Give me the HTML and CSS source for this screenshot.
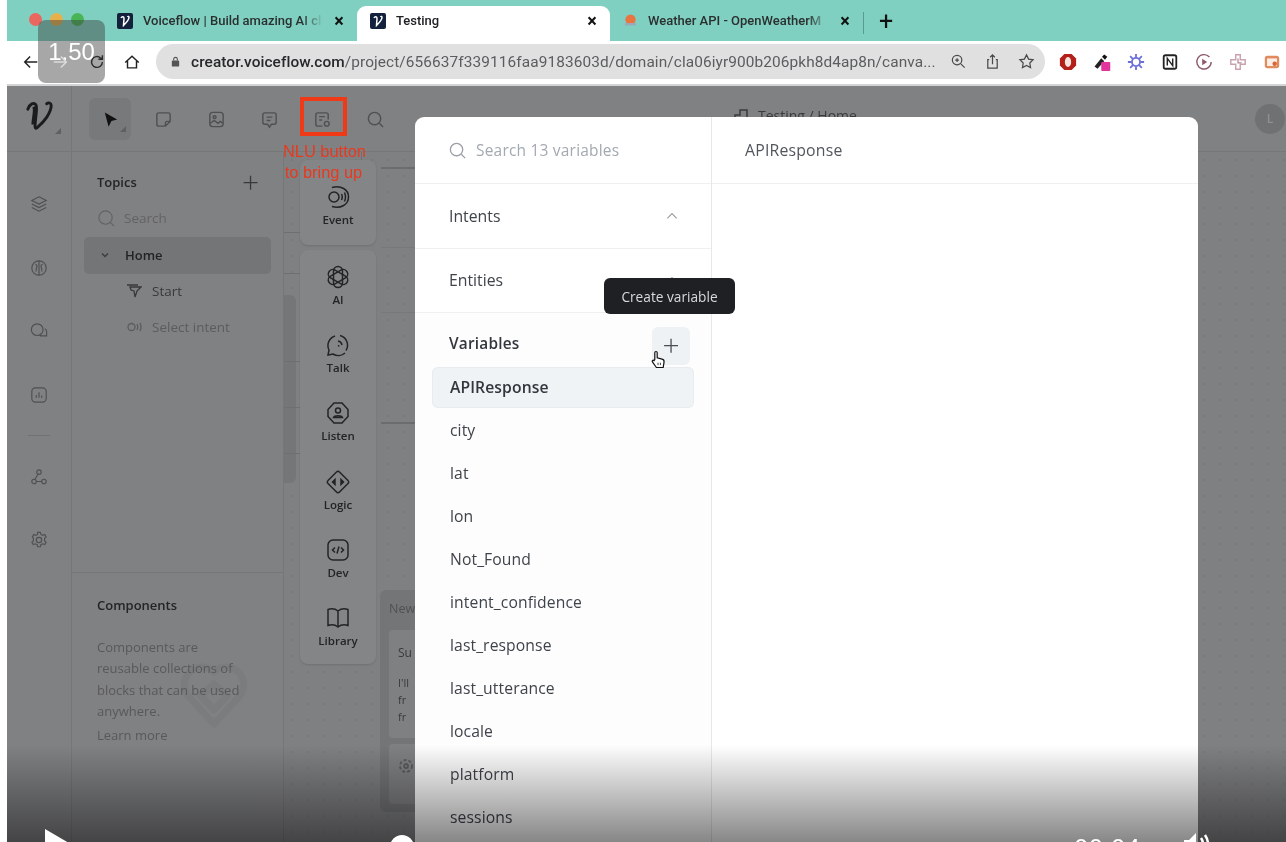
FILE: index.html
```html
<!DOCTYPE html>
<html lang="en">
<head>
<meta charset="utf-8">
<title>Testing</title>
<link rel="stylesheet" href="styles.css">
</head>
<body>
<div class="video">
  <div class="tabbar">
    <div class="lights"><i class="light red"></i><i class="light orange"></i><i class="light green"></i></div>
    <div class="tab tab-one">
      <svg class="fav" viewBox="0 0 16 16"><rect width="16" height="16" rx="2" fill="#14213d"/><path d="M4 5c1-2 3-1.500 3 .5 0 2-.5 5-.5 7C9 10 12 7 12 4.500c0-1.200-1-1.500-1.500-.5" fill="none" stroke="#fff" stroke-width="1.500"/></svg>
      <span class="tab-label fade">Voiceflow | Build amazing AI cl</span><span class="tab-x">×</span>
    </div>
    <div class="tab tab-two">
      <svg class="fav" viewBox="0 0 16 16"><rect width="16" height="16" rx="2" fill="#14213d"/><path d="M4 5c1-2 3-1.500 3 .5 0 2-.5 5-.5 7C9 10 12 7 12 4.500c0-1.200-1-1.500-1.500-.5" fill="none" stroke="#fff" stroke-width="1.500"/></svg>
      <span class="tab-label">Testing</span><span class="tab-x">×</span>
    </div>
    <div class="tab tab-three">
      <svg class="fav small" viewBox="0 0 16 16"><circle cx="8" cy="7" r="5.500" fill="#e8743f"/><path d="M2 12h12" stroke="#9ab" stroke-width="2.500"/></svg>
      <span class="tab-label fade">Weather API - OpenWeatherM</span><span class="tab-x">×</span>
    </div>
    <i class="tab-sep"></i>
    <span class="tab-plus">+</span>
  </div>

  <div class="browserbar">
    <svg class="nav-icon back" viewBox="0 0 20 20"><path d="M17 10H3M9 4l-6 6 6 6"/></svg>
    <svg class="nav-icon forward" viewBox="0 0 20 20"><path d="M3 10h14M11 4l6 6-6 6"/></svg>
    <svg class="nav-icon reload" viewBox="0 0 20 20"><path d="M16 10a6 6 0 1 1-2-4.500L16 7M16 2.500V7h-4.500"/></svg>
    <svg class="nav-icon home" viewBox="0 0 20 20"><path d="M2.500 10.500 10 3.500l7.500 7M5 9v7.500h10V9"/></svg>
    <div class="urlbar">
      <svg class="lock" viewBox="0 0 12 12"><rect x="2" y="5" width="8" height="6.500" rx="1"/><path d="M4 5V3.500a2 2 0 0 1 4 0V5" fill="none" stroke="#555" stroke-width="1.200"/></svg>
      <span class="url"><b>creator.voiceflow.com</b>/project/656637f339116faa9183603d/domain/cla06iyr900b206pkh8d4ap8n/canva...</span>
      <svg class="url-icon" viewBox="0 0 18 18"><circle cx="7.500" cy="7.500" r="5"/><path d="m11.500 11.500 4 4M5.500 7.500h4M7.500 5.500v4"/></svg>
      <svg class="url-icon" viewBox="0 0 18 18"><path d="M5.500 7H4v9h10V7h-1.500M9 12V2M6.500 4.500 9 2l2.500 2.500"/></svg>
      <svg class="url-icon" viewBox="0 0 18 18"><path d="m9 2 2.200 4.500 4.800.7-3.500 3.400.8 4.900L9 13.200l-4.300 2.300.8-4.900L2 7.200l4.800-.7z"/></svg>
    </div>
    <div class="extensions">
      <svg class="ext" viewBox="0 0 20 20"><path d="M6 1h8l5 5v8l-5 5H6l-5-5V6z" fill="#b3201a"/><ellipse cx="10" cy="10" rx="3.500" ry="5.500" fill="#f4e4dc"/></svg>
      <svg class="ext" viewBox="0 0 24 24"><path d="m2 18 9-11 4 4-9 10z" fill="#222"/><path d="m12 5 3-3 4 3-3 4z" fill="#111"/><rect x="11" y="12" width="12" height="12" rx="1" fill="#e0359a"/></svg>
      <svg class="ext" viewBox="0 0 20 20"><circle cx="10" cy="10" r="4.500" fill="none" stroke="#6a6fd8" stroke-width="2"/><path d="M10 1v4M10 15v4M1 10h4M15 10h4M3.500 3.500l3 3M13.500 13.500l3 3M16.500 3.500l-3 3M6.500 13.500l-3 3" stroke="#6a6fd8" stroke-width="2"/></svg>
      <svg class="ext" viewBox="0 0 20 20"><rect x="3" y="2.500" width="14" height="15" rx="2" fill="#fff" stroke="#222" stroke-width="2"/><path d="M7 14V6l6 8V6" fill="none" stroke="#222" stroke-width="1.600"/></svg>
      <svg class="ext" viewBox="0 0 20 20"><path d="M16 4.500A8 8 0 1 0 18 10" fill="none" stroke="#8d5a6e" stroke-width="1.600"/><path d="m8 6.500 5.500 3.500L8 13.500z" fill="#8d5a6e"/></svg>
      <svg class="ext" viewBox="0 0 20 20"><path d="M7.500 2h5v5.500H18v5h-5.500V18h-5v-5.500H2v-5h5.500z" fill="#fff" stroke="#c9a3ac" stroke-width="1.600"/><path d="M10 6v5h4" fill="none" stroke="#b48b95" stroke-width="1.400"/></svg>
      <svg class="ext" viewBox="0 0 20 20"><rect x="2" y="3" width="16" height="14" rx="3" fill="#e08a5e"/><rect x="4.500" y="6" width="11" height="8.500" fill="#fbeee6"/><circle cx="13" cy="12" r="2.500" fill="#d8643a"/></svg>
    </div>
  </div>

  <header class="apphead">
    <div class="logo-cell">
      <svg class="logo" viewBox="0 0 30 34"><path d="M2 10C4 4 9 2 11 5c2 3 0 8-1 24 0 2 1 3 3 1C20 24 28 14 28 6c0-3-3-4-5-2" fill="none" stroke="#1b1c1e" stroke-width="3.200" stroke-linecap="round"/><path d="M9 7c2 5-1 13-1 20" fill="none" stroke="#1b1c1e" stroke-width="4"/></svg>
      <i class="corner"></i>
    </div>
    <div class="tools">
      <div class="tool selected"><svg viewBox="0 0 20 20"><path d="M4 2.500 17 10l-6 1.500-3 6z" fill="#111"/></svg><i class="corner"></i></div>
      <div class="tool"><svg viewBox="0 0 20 20"><path d="M5 3h10a2 2 0 0 1 2 2v7l-5 5H5a2 2 0 0 1-2-2V5a2 2 0 0 1 2-2zM12 17v-3a2 2 0 0 1 2-2h3"/></svg></div>
      <div class="tool"><svg viewBox="0 0 20 20"><rect x="3" y="2.500" width="14" height="15" rx="3"/><circle cx="8" cy="7.500" r="1.500"/><path d="m3.500 14 4-3 4 3 2.500-2 2.500 2"/></svg></div>
      <div class="tool"><svg viewBox="0 0 20 20"><path d="M5 3h10a2 2 0 0 1 2 2v8a2 2 0 0 1-2 2h-3l-2 3-2-3H5a2 2 0 0 1-2-2V5a2 2 0 0 1 2-2zM7 7.500h6M7 11h4"/></svg></div>
      <div class="tool"><svg viewBox="0 0 20 20"><path d="M10 17H5a2 2 0 0 1-2-2V5a2 2 0 0 1 2-2h9a2 2 0 0 1 2 2v5M6.500 7h6M6.500 10.500h3"/><circle cx="14.500" cy="14.500" r="2.500"/></svg></div>
      <div class="tool"><svg viewBox="0 0 20 20"><circle cx="9" cy="9" r="6.500"/><path d="m14 14 4 4"/></svg></div>
    </div>
    <div class="doc-title"><svg viewBox="0 0 18 18"><path d="M3 8v7h12V3H8v5z"/></svg><span>Testing / Home</span></div>
    <div class="avatar">L</div>
  </header>

  <div class="appbody">
    <nav class="rail">
      <svg viewBox="0 0 20 20"><path d="m10 2 8 4-8 4-8-4zM2 10l8 4 8-4M2 14l8 4 8-4"/></svg>
      <svg viewBox="0 0 20 20"><circle cx="10" cy="10" r="8"/><path d="M10 2v16M6 6c2 0 2 2 1.500 3.500S6 13 7 14M14 6c-2 0-2 2-1.500 3.500S14 13 13 14"/></svg>
      <svg viewBox="0 0 20 20"><circle cx="8" cy="8.500" r="6.500"/><path d="M11 15.500h7.500V11a4 4 0 0 0-2-3.500M12.500 15.500 10.500 14"/></svg>
      <svg viewBox="0 0 20 20"><rect x="2" y="2" width="16" height="16" rx="4"/><path d="M7 10v3M10 7v6M13 10.500V13"/></svg>
      <i class="rail-sep"></i>
      <svg viewBox="0 0 20 20"><circle cx="10" cy="4.500" r="2.500"/><circle cx="4.500" cy="15" r="2.500"/><circle cx="15.500" cy="15" r="2.500"/><path d="M9 7 5.500 12.500M7 15h6"/></svg>
      <svg viewBox="0 0 20 20"><path d="M8.500 1.500h3l.6 2.300 2.100 1 2.200-.9 1.500 2.600-1.700 1.600v2.800l1.700 1.600-1.500 2.600-2.200-.9-2.100 1-.6 2.300h-3l-.6-2.300-2.100-1-2.200.9-1.500-2.600 1.700-1.600V8.100L2.600 6.500l1.500-2.600 2.200.9 2.100-1z"/><circle cx="10" cy="10" r="3"/></svg>
    </nav>

    <aside class="sidebar">
      <section class="topics">
        <div class="topics-head"><h3>Topics</h3><span class="plus">+</span></div>
        <div class="side-search">
          <svg viewBox="0 0 20 20"><circle cx="9" cy="9" r="7"/><path d="m14 14 4 4"/></svg><span>Search</span>
        </div>
        <div class="home-row"><svg viewBox="0 0 10 10"><path d="m2 3.500 3 3 3-3"/></svg><strong>Home</strong></div>
        <div class="sub-row first"><svg viewBox="0 0 16 16"><path d="M4 4h11l-4 4-2 6-1-6-3-1zM1 2h11"/></svg><span>Start</span></div>
        <div class="sub-row dim"><svg viewBox="0 0 16 16"><circle cx="5.500" cy="8" r="3.500"/><path d="M11 5q1.500 3 0 6M14 4q2 4 0 8"/></svg><span>Select intent</span></div>
      </section>
      <section class="components">
        <svg class="watermark" viewBox="0 0 70 70"><path d="M35 10c8-8 20-6 26 2s4 18-2 24L35 62 11 36c-6-6-8-16-2-24s18-10 26-2z"/><path d="m22 34 13 14 13-14-13-12z"/></svg>
        <h3>Components</h3>
        <p>Components are reusable collections of blocks that can be used anywhere.</p>
        <a>Learn more</a>
      </section>
    </aside>

    <main class="canvas">
      <i class="wire wire-a"></i>
      <i class="wire wire-b"></i>
      <i class="wire faint wire-c"></i>
      <i class="wire faint wire-d"></i>
      <i class="stub-panel"></i>
      <i class="stub stub-a"></i>
      <i class="stub stub-b"></i>
      <i class="stub stub-c"></i>
      <i class="stub stub-d"></i>
      <i class="stub stub-e"></i>
      <i class="stub-v"></i>
      <div class="node">
        <div class="node-title">New</div>
        <div class="node-card tall"><b>Su</b><p>I'll<br>fr<br>fr</p></div>
        <div class="node-card short"><svg viewBox="0 0 16 16"><circle cx="8" cy="8" r="6" stroke-dasharray="3 2"/><circle cx="8" cy="8" r="2"/></svg></div>
      </div>
      <div class="palette">
        <div class="pal-card pal-event">
          <div class="pal-item"><svg viewBox="0 0 24 24"><circle cx="8" cy="12" r="5"/><path d="M15.500 9q1.500 3 0 6M18.500 7.500q2 4.500 0 9M6 2.500c9-2.500 16.500 2 16.500 9.500S15 24 6 21.500"/></svg><span>Event</span></div>
        </div>
        <div class="pal-card pal-main">
          <div class="pal-item"><svg viewBox="0 0 24 24"><rect x="7.500" y="1.500" width="9" height="21" rx="4.500"/><rect x="7.500" y="1.500" width="9" height="21" rx="4.500" transform="rotate(60 12 12)"/><rect x="7.500" y="1.500" width="9" height="21" rx="4.500" transform="rotate(120 12 12)"/></svg><span>AI</span></div>
          <div class="pal-item"><svg viewBox="0 0 24 24"><path d="M14 2.500a10 10 0 0 1 6 15M19 20a10 10 0 0 1-12 1l-5 1 1-5A10 10 0 0 1 9 3M12 8a5 5 0 0 1 4 4M12 12.500a1.500 1.500 0 0 1 1 1"/></svg><span>Talk</span></div>
          <div class="pal-item"><svg viewBox="0 0 24 24"><path d="M8 2h8l6 6.500v7L16 22H8l-6-6.500v-7z"/><circle cx="12" cy="9.500" r="2.500"/><path d="M7.500 16.500c1-2.500 8-2.500 9 0z"/></svg><span>Listen</span></div>
          <div class="pal-item"><svg viewBox="0 0 24 24"><path d="M10.500 2 2 10.500a2 2 0 0 0 0 3L10.500 22a2 2 0 0 0 3 0l8.500-8.500a2 2 0 0 0 0-3L13.500 2a2 2 0 0 0-3 0z"/><path d="M9 9.500 6.500 12 9 14.500zM15 9.500l2.500 2.500-2.500 2.500z" fill="currentColor"/></svg><span>Logic</span></div>
          <div class="pal-item"><svg viewBox="0 0 24 24"><rect x="2" y="2" width="20" height="20" rx="5"/><path d="M9 9.500 6.500 12 9 14.500M15 9.500l2.500 2.500-2.500 2.500M13 8.500 11 15.500"/></svg><span>Dev</span></div>
          <div class="pal-item"><svg viewBox="0 0 24 24"><path d="M12 5C9 2.500 5 2.500 2 3.500v16c3-1 7-1 10 1.500 3-2.500 7-2.500 10-1.500v-16C19 2.500 15 2.500 12 5zM12 5v16"/></svg><span>Library</span></div>
        </div>
      </div>
    </main>
  </div>

  <div class="speed">1.50</div>
  <div class="annotation-box"></div>
  <div class="annotation-text">NLU button<br>to bring up</div>

  <div class="modal">
    <div class="modal-left">
      <div class="modal-search">
        <svg viewBox="0 0 20 20"><circle cx="9" cy="9" r="6.500"/><path d="m14 14 4 4"/></svg><span>Search 13 variables</span>
      </div>
      <div class="acc-row"><span>Intents</span><svg viewBox="0 0 12 12"><path d="m2 8 4-4 4 4"/></svg></div>
      <div class="acc-row"><span>Entities</span><svg viewBox="0 0 12 12"><path d="m2 8 4-4 4 4"/></svg></div>
      <div class="var-section">
        <div class="var-head"><strong>Variables</strong><span class="var-add">+</span></div>
        <ul class="var-list">
          <li class="active">APIResponse</li>
          <li>city</li>
          <li>lat</li>
          <li>lon</li>
          <li>Not_Found</li>
          <li>intent_confidence</li>
          <li>last_response</li>
          <li>last_utterance</li>
          <li>locale</li>
          <li>platform</li>
          <li>sessions</li>
        </ul>
      </div>
    </div>
    <div class="modal-right"><div class="detail-head">APIResponse</div></div>
  </div>

  <div class="tooltip">Create variable</div>
  <svg class="hand" viewBox="0 0 20 24"><path d="M6 12V3.500a1.500 1.500 0 0 1 3 0V10l6 1.500c2 .5 3 1.500 2.500 4L16.500 22H8l-5-7c-1-1.500 1-3 2-1.500z" fill="#fff" stroke="#111" stroke-width="1.500"/><path d="M10 16v3M13 16v3" stroke="#111"/></svg>

  <div class="scrim"></div>
  <svg class="play" viewBox="0 0 24 24"><path d="M0 0 24 14 0 28z" fill="#fff"/></svg>
  <i class="seek-thumb"></i>
  <span class="time">00:04</span>
  <svg class="volume" viewBox="0 0 28 24"><path d="M1 8h5l7-7v22l-7-7H1z" fill="#fff"/><path d="M18 6q4 6 0 12M22 3q6 9 0 18" fill="none" stroke="#fff" stroke-width="2.500"/></svg>
</div>
</body>
</html>
```

FILE: styles.css
```css
* { box-sizing: border-box; }
html, body { margin: 0; padding: 0; height: 100%; background: #fff; overflow: hidden; }
body { font-family: "Open Sans", "Liberation Sans", sans-serif; }
svg { display: block; flex: none; }
h3, p, ul { margin: 0; padding: 0; }

.video {
  position: relative;
  width: 1279px;
  height: 842px;
  margin-left: 7px;
  overflow: hidden;
  display: flex;
  flex-direction: column;
  background: #808183;
  filter: blur(0.5px);
}

/* browser chrome */
.tabbar {
  height: 41px;
  background: #7fd0c0;
  display: flex;
  align-items: flex-end;
  flex: none;
  font-family: Roboto, "Liberation Sans", sans-serif;
  font-size: 13px;
  font-weight: 500;
  color: #2b2f30;
}
.lights { display: flex; gap: 8px; width: 97px; padding: 0 0 15px 22px; align-self: flex-end; }
.light { width: 13px; height: 13px; border-radius: 50%; }
.red { background: #e9675f; }
.orange { background: #e8b04a; }
.green { background: #48b455; }
.tab { height: 35px; display: flex; align-items: center; flex: none; }
.tab-one { width: 253px; padding: 0 10px 6px 13px; }
.tab-two { width: 253px; padding: 0 10px 6px 13px; background: #fff; border-radius: 9px 9px 0 0; color: #202124; }
.tab-three { width: 253px; padding: 0 10px 6px 13px; }
.fav { width: 16px; height: 16px; margin-right: 10px; }
.fav.small { width: 15px; height: 15px; }
.tab-label { flex: 1; white-space: nowrap; overflow: hidden; }
.fade { -webkit-mask-image: linear-gradient(90deg, #000 88%, transparent 100%); mask-image: linear-gradient(90deg, #000 88%, transparent 100%); }
.tab-x { font-size: 18px; line-height: 1; font-weight: 700; width: 16px; text-align: center; color: #111; margin-left: 8px; }
.tab-sep { width: 1px; height: 22px; background: #5c9b8f; margin: 0 0 7px 0; }
.tab-plus { font-size: 25px; line-height: 1; font-weight: 400; color: #111; margin: 0 0 7px 15px; }

.browserbar {
  height: 45px;
  flex: none;
  background: #fff;
  border-bottom: 2px solid #d4d4d4;
  display: flex;
  align-items: center;
  padding-bottom: 2px;
}
.nav-icon { width: 18px; height: 18px; fill: none; stroke: #222; stroke-width: 1.600; }
.back { margin-left: 15px; }
.forward { margin-left: 11px; stroke: #dcdcdc; position: relative; z-index: 2; }
.reload { margin-left: 19px; }
.home { margin-left: 17px; }
.urlbar {
  margin-left: 15px;
  width: 889px;
  height: 35px;
  background: #e0e0e0;
  border-radius: 18px;
  display: flex;
  align-items: center;
  padding-left: 14px;
}
.lock { width: 11px; height: 11px; fill: #555; margin-right: 10px; }
.url {
  font-family: Roboto, "Liberation Sans", sans-serif;
  font-size: 15.400px;
  color: #5a5c5e;
  white-space: nowrap;
  width: 759px;
  letter-spacing: 0.1px;
  flex: none;
}
.url b { font-weight: 500; color: #26282a; }
.url-icon { width: 17px; height: 17px; fill: none; stroke: #4a4a4a; stroke-width: 1.300; margin-right: 17px; }
.extensions { display: flex; align-items: center; gap: 16px; margin-left: 14px; }
.ext { width: 18px; height: 18px; }

/* app header */
.apphead { height: 66px; flex: none; display: flex; align-items: flex-start; border-bottom: 1px solid #767779; position: relative; }
.logo-cell { position: relative; width: 65px; height: 65px; border-right: 1px solid #767779; padding: 14px 0 0 19px; }
.logo { width: 27px; height: 31px; }
.corner { position: absolute; width: 0; height: 0; border-left: 6px solid transparent; border-bottom: 6px solid #5f6062; }
.logo-cell .corner { left: 48px; top: 42px; }
.tool .corner { right: 5px; bottom: 8px; }
.tools { display: flex; align-items: flex-start; padding: 12px 0 0 17px; width: 660px; }
.tool { position: relative; width: 42px; height: 42px; display: flex; align-items: center; justify-content: center; margin-right: 11px; color: #4f5052; }
.tool svg { width: 19px; height: 19px; fill: none; stroke: currentColor; stroke-width: 1.500; }
.tool.selected { background: #78797b; border-radius: 6px; }
.tool.selected svg { stroke: none; }
.doc-title { display: flex; align-items: center; gap: 8px; color: #3a3b3d; font-size: 14px; margin-top: 20px; }
.doc-title svg { width: 18px; height: 18px; fill: none; stroke: currentColor; stroke-width: 1.500; }
.avatar {
  position: absolute;
  right: 1px;
  top: 18px;
  width: 30px;
  height: 30px;
  border-radius: 50%;
  background: #707173;
  color: #8f9092;
  font-size: 12px;
  font-weight: 600;
  text-align: center;
  line-height: 30px;
}

/* app body */
.appbody { flex: 1; min-height: 0; display: flex; }
.rail {
  width: 65px;
  flex: none;
  border-right: 1px solid #767779;
  display: flex;
  flex-direction: column;
  align-items: center;
  padding-top: 43px;
  color: #4f5052;
}
.rail svg { width: 18px; height: 18px; fill: none; stroke: currentColor; stroke-width: 1.300; margin-bottom: 45.700px; }
.rail-sep { width: 22px; height: 1px; background: #707173; margin: -15px 0 32px; }
.sidebar { width: 212px; flex: none; border-right: 1px solid #767779; display: flex; flex-direction: column; }
.topics { height: 421px; border-bottom: 1px solid #767779; padding-top: 18px; }
.topics-head { display: flex; justify-content: space-between; align-items: center; height: 24px; padding: 0 24px 0 25px; }
h3 { font-size: 13px; font-weight: 600; color: #232426; }
.plus { font-size: 30px; line-height: 24px; font-weight: 300; color: #38393b; }
.side-search { display: flex; align-items: center; gap: 8px; height: 24px; margin: 12px 0 0 25px; color: #626365; font-size: 13.500px; }
.side-search svg { width: 19px; height: 19px; fill: none; stroke: currentColor; stroke-width: 1.200; }
.home-row {
  display: flex;
  align-items: center;
  height: 37px;
  margin: 7px 12px 0;
  padding: 0 0 2px 16px;
  background: #747577;
  border-radius: 5px;
  font-size: 13px;
  color: #222325;
}
.home-row svg { width: 10px; height: 10px; fill: none; stroke: #3d3e40; stroke-width: 1.500; margin-right: 15px; }
.home-row strong { font-weight: 600; }
.sub-row { display: flex; align-items: center; height: 36px; padding-left: 54px; font-size: 13.500px; color: #38393b; }
.sub-row.first { margin-top: -1px; }
.sub-row svg { width: 16px; height: 16px; fill: none; stroke: currentColor; stroke-width: 1.300; margin-right: 10px; }
.sub-row.dim { color: #5b5c5e; }
.components { position: relative; flex: 1; padding: 23px 25px; }
.components h3, .components p, .components a { position: relative; }
.components p { margin-top: 23px; font-size: 13px; line-height: 21.300px; color: #58595b; width: 155px; }
.components a { display: block; margin-top: 3px; font-size: 13px; line-height: 21px; color: #58595b; }
.watermark { position: absolute; left: 107px; top: 88px; width: 70px; height: 72px; fill: none; stroke: #7b7c7e; stroke-width: 7; stroke-linejoin: round; }

/* canvas */
.canvas {
  position: relative;
  flex: 1;
  background-color: #7f8082;
  background-image: radial-gradient(#78797b 1px, transparent 1.200px);
  background-size: 16px 16px;
  padding: 8px 0 0 16px;
}
.wire { position: absolute; left: 97px; width: 60px; height: 2px; background: #6b6c6e; }
.wire-a { top: 15px; }
.wire-b { top: 270px; }
.wire.faint { background: #77787a; height: 1px; }
.wire-c { top: 95px; }
.wire-d { top: 160px; }
.stub-panel { position: absolute; left: 0; top: 143px; width: 12px; height: 188px; background: #757678; border-radius: 0 6px 6px 0; }
.stub { position: absolute; left: 0; width: 16px; height: 1px; background: #6e6f71; }
.stub-a { top: 80px; }
.stub-b { top: 121px; }
.stub-c { top: 209px; }
.stub-d { top: 255px; }
.stub-e { top: 301px; }
.stub-v { position: absolute; left: 77px; top: 0; width: 1px; height: 14px; background: #6e6f71; }
.palette { position: relative; width: 76px; display: flex; flex-direction: column; gap: 5px; }
.pal-card { background: #848587; border-radius: 8px; display: flex; flex-direction: column; box-shadow: 0 1px 2px #6f7072; padding-top: 8px; overflow: hidden; }
.pal-main { height: 414px; }
.pal-event { height: 85px; padding: 16px 0 0; }
.pal-item { height: 68.200px; flex: none; display: flex; flex-direction: column; align-items: center; gap: 3px; padding-top: 7px; color: #232426; font-size: 11.500px; font-weight: 600; }
.pal-event .pal-item { height: auto; padding-top: 9px; }
.pal-item svg { width: 24px; height: 24px; fill: none; stroke: currentColor; stroke-width: 1.500; }
.node {
  position: absolute;
  left: 96px;
  top: 438px;
  width: 60px;
  height: 222px;
  background: #747577;
  border-radius: 6px;
  padding: 10px 0 0 9px;
  overflow: hidden;
  color: #38393b;
}
.node-title { font-size: 12.500px; color: #505153; height: 30px; }
.node-card { background: #7f8082; border-radius: 4px; margin-bottom: 6px; padding: 14px 0 0 9px; font-size: 12px; }
.node-card b { font-weight: 400; }
.node-card p { margin-top: 13px; font-size: 11px; line-height: 17px; }
.tall { height: 108px; }
.short { height: 60px; }
.short svg { width: 16px; height: 16px; fill: none; stroke: #5a5b5d; stroke-width: 1.800; }

/* overlays over the video */
.speed {
  position: absolute;
  left: 31px;
  top: 20px;
  width: 67px;
  height: 63px;
  border-radius: 8px;
  background: rgba(60, 60, 60, 0.45);
  color: #fff;
  font-family: "Liberation Sans", sans-serif;
  font-size: 24px;
  text-align: center;
  line-height: 63px;
}
.annotation-box { position: absolute; left: 293px; top: 97px; width: 47px; height: 39px; border: 4px solid #f03a17; }
.annotation-text {
  position: absolute;
  left: 276px;
  top: 141px;
  width: 81px;
  font-family: "Liberation Sans", sans-serif;
  font-size: 16.400px;
  line-height: 21px;
  color: #e8391f;
  text-align: center;
  white-space: nowrap;
}

.modal {
  position: absolute;
  left: 408px;
  top: 117px;
  width: 783px;
  height: 760px;
  background: #fff;
  border-radius: 9px;
  display: flex;
  overflow: hidden;
  color: #3f434a;
}
.modal-left { width: 297px; flex: none; border-right: 1px solid #e6e8ea; font-size: 15.800px; }
.modal-search { height: 67px; display: flex; align-items: center; gap: 9px; padding-left: 33px; border-bottom: 1px solid #eef0f1; color: #a3a9b0; font-size: 15.500px; letter-spacing: 0.2px; }
.modal-search svg { width: 19px; height: 19px; fill: none; stroke: #9aa0a6; stroke-width: 1.400; }
.acc-row { height: 64.500px; display: flex; align-items: center; justify-content: space-between; padding: 0 32px 0 34px; border-bottom: 1px solid #eef0f1; }
.acc-row svg { width: 14px; height: 14px; fill: none; stroke: #9a9fa4; stroke-width: 1; }
.var-section { background: #fdfdfd; padding: 0 17px; }
.var-head { height: 54px; display: flex; align-items: center; justify-content: space-between; padding: 6px 4px 0 17px; color: #33373d; }
.var-head strong { font-weight: 600; font-size: 15.400px; letter-spacing: 0.2px; }
.var-add { width: 38px; height: 38px; margin-top: 6px; background: #eef2f4; border-radius: 6px; text-align: center; font-size: 30px; line-height: 36px; font-weight: 300; color: #4b4f55; }
.var-list { list-style: none; display: flex; flex-direction: column; gap: 2px; }
.var-list li { height: 41px; display: flex; align-items: center; padding: 0 0 2px 18px; border-radius: 6px; font-size: 15.700px; letter-spacing: 0.1px; }
.var-list li.active { background: #eff3f5; font-weight: 600; box-shadow: inset 0 0 0 1px #e8ecee; font-size: 15.700px; color: #33373d; }
.modal-right { flex: 1; }
.detail-head { height: 67px; display: flex; align-items: center; padding-left: 33px; border-bottom: 1px solid #eef0f1; font-size: 15.800px; font-weight: 500; color: #52565c; letter-spacing: 0.2px; }

.tooltip {
  position: absolute;
  left: 597px;
  top: 278px;
  width: 131px;
  height: 36px;
  background: #1f2023;
  border-radius: 6px;
  color: #d8d9db;
  font-size: 13.700px;
  text-align: center;
  line-height: 37px;
  white-space: nowrap;
}
.hand { position: absolute; left: 643px; top: 349px; width: 16px; height: 21px; }

.scrim {
  position: absolute;
  left: 0;
  right: 0;
  bottom: 0;
  height: 97px;
  background: linear-gradient(180deg, rgba(0, 0, 0, 0) 0%, rgba(0, 0, 0, 0.47) 100%);
}
.play { position: absolute; left: 38px; top: 829px; width: 24px; height: 24px; overflow: visible; }
.seek-thumb { position: absolute; left: 383px; top: 835px; width: 24px; height: 24px; border-radius: 50%; background: #fff; }
.time { position: absolute; left: 1067px; top: 834px; font-family: "Liberation Sans", sans-serif; font-size: 25.500px; line-height: 28px; color: #fff; letter-spacing: 0.5px; }
.volume { position: absolute; left: 1176px; top: 832px; width: 28px; height: 24px; }
```
